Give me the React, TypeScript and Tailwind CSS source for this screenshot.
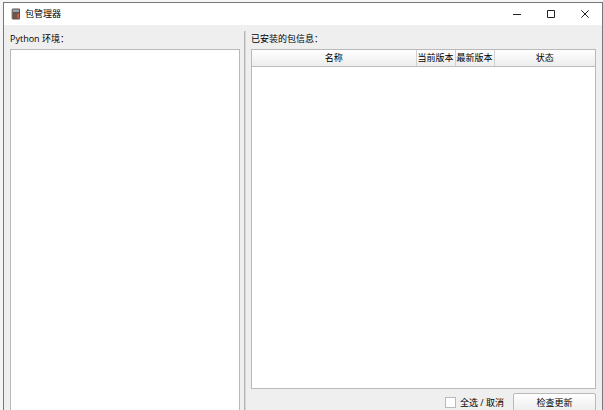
const columns = [
    { label: '名称', width: 'w-auto' },
    { label: '当前版本', width: 'w-[39px]' },
    { label: '最新版本', width: 'w-[39px]' },
    { label: '状态', width: 'w-[101px]' },
];

function AppIcon() {
    return (
        <svg width="10" height="12" viewBox="0 0 10 12" aria-hidden="true">
            <rect x="1" y="0.5" width="8" height="11" rx="1" fill="#5a5352" />
            <path d="M1 1.5v9" stroke="#8d8a8b" />
            <rect x="2" y="1.5" width="6" height="2.5" fill="#9aa3a8" />
            <path d="M2.5 5.5h1.2v1.2H2.5zM4.4 5.5h1.2v1.2H4.4zM2.5 7.4h1.2v1.2H2.5zM4.4 7.4h1.2v1.2H4.4zM2.5 9.3h1.2v1.2H2.5zM4.4 9.3h1.2v1.2H4.4z" fill="#a8503a" />
            <path d="M6.3 5.5h1.7v5H6.3z" fill="#d0633f" />
        </svg>
    );
}

function TitleBar() {
    return (
        <header className="flex h-[22px] shrink-0 items-center bg-white pl-[7px]">
            <AppIcon />
            <h1 className="ml-1 flex-1">包管理器</h1>
            <button type="button" aria-label="最小化" className="flex h-full w-[34px] items-center justify-center">
                <svg width="8" height="8" viewBox="0 0 8 8" stroke="#222">
                    <path d="M0 4.5h8" />
                </svg>
            </button>
            <button type="button" aria-label="最大化" className="flex h-full w-[34px] items-center justify-center">
                <svg width="8" height="8" viewBox="0 0 8 8" fill="none" stroke="#222">
                    <path d="M.5.5h7v7h-7z" />
                </svg>
            </button>
            <button type="button" aria-label="关闭" className="flex h-full w-[34px] items-center justify-center">
                <svg width="8" height="8" viewBox="0 0 8 8" fill="none" stroke="#222">
                    <path d="M.3.3l7.4 7.4M7.7.3L.3 7.7" />
                </svg>
            </button>
        </header>
    );
}

function PackageTable() {
    return (
        <div className="min-h-0 flex-1 border border-[#b9b9b9] bg-white">
            <table className="w-full table-fixed border-collapse">
                <thead>
                    <tr className="h-4 bg-linear-to-b from-white to-[#ededed]">
                        {columns.map((col) => (
                            <th
                                key={col.label}
                                className={`${col.width} border-r border-b border-r-[#d0d0d0] border-b-[#bdbdbd] p-0 text-center font-normal whitespace-nowrap last:border-r-0`}
                            >
                                {col.label}
                            </th>
                        ))}
                    </tr>
                </thead>
                <tbody />
            </table>
        </div>
    );
}

export default function App() {
    return (
        <div className="h-screen overflow-hidden bg-[#f5f5f5] pt-[2px] pl-[3px] font-['Open_Sans','Noto_Sans_CJK_SC',sans-serif] text-[9px] leading-3 text-black">
            {/* The window runs a little past the bottom of the screen */}
            <div className="flex h-[calc(100vh+5px)] flex-col border border-[#777] bg-[#efefef]">
                <TitleBar />
                <main className="flex min-h-0 flex-1 pr-[6px] pl-[6px]">
                    <section className="flex w-[230px] shrink-0 flex-col pt-2">
                        <h2 id="env-label" className="mb-1">
                            Python 环境：
                        </h2>
                        <ul aria-labelledby="env-label" className="min-h-0 flex-1 border border-[#b9b9b9] bg-white" />
                    </section>

                    <div className="mt-[6px] mr-[5px] ml-1 w-[2px] shrink-0 border-l border-[#b4b4b4] bg-[#d6d6d6]" />

                    <section className="flex min-w-0 flex-1 flex-col pt-2">
                        <h2 className="mb-1">已安装的包信息：</h2>
                        <PackageTable />
                        <div className="mt-1 mb-1 flex h-[19px] items-center justify-end">
                            <label className="flex items-center gap-1">
                                <input type="checkbox" className="size-[11px] appearance-none border border-[#b9b9b9] bg-white checked:bg-[#4a4a4a]" />
                                全选 / 取消
                            </label>
                            <button
                                type="button"
                                className="ml-[9px] h-full w-[83px] rounded-xs border border-[#b9b9b9] bg-linear-to-b from-white to-[#ededed]"
                            >
                                检查更新
                            </button>
                        </div>
                    </section>
                </main>
            </div>
        </div>
    );
}
